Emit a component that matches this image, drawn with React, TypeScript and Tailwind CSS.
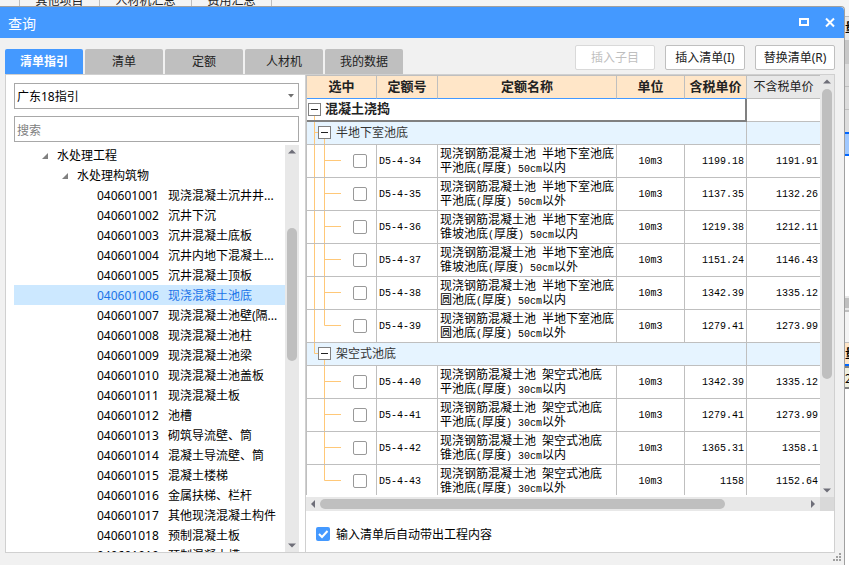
import { Fragment } from 'react'

const tabs = ['清单指引', '清单', '定额', '人材机', '我的数据']

const guideItems = [
  { code: '040601001', name: '现浇混凝土沉井井...' },
  { code: '040601002', name: '沉井下沉' },
  { code: '040601003', name: '沉井混凝土底板' },
  { code: '040601004', name: '沉井内地下混凝土...' },
  { code: '040601005', name: '沉井混凝土顶板' },
  { code: '040601006', name: '现浇混凝土池底' },
  { code: '040601007', name: '现浇混凝土池壁(隔...' },
  { code: '040601008', name: '现浇混凝土池柱' },
  { code: '040601009', name: '现浇混凝土池梁' },
  { code: '040601010', name: '现浇混凝土池盖板' },
  { code: '040601011', name: '现浇混凝土板' },
  { code: '040601012', name: '池槽' },
  { code: '040601013', name: '砌筑导流壁、筒' },
  { code: '040601014', name: '混凝土导流壁、筒' },
  { code: '040601015', name: '混凝土楼梯' },
  { code: '040601016', name: '金属扶梯、栏杆' },
  { code: '040601017', name: '其他现浇混凝土构件' },
  { code: '040601018', name: '预制混凝土板' },
  { code: '040601019', name: '预制混凝土槽' },
]

const selectedCode = '040601006'

const groups = [
  {
    title: '半地下室池底',
    rows: [
      { code: 'D5-4-34', name: ['现浇钢筋混凝土池 半地下室池底', '平池底(厚度) 50cm以内'], taxed: '1199.18', untaxed: '1191.91' },
      { code: 'D5-4-35', name: ['现浇钢筋混凝土池 半地下室池底', '平池底(厚度) 50cm以外'], taxed: '1137.35', untaxed: '1132.26' },
      { code: 'D5-4-36', name: ['现浇钢筋混凝土池 半地下室池底', '锥坡池底(厚度) 50cm以内'], taxed: '1219.38', untaxed: '1212.11' },
      { code: 'D5-4-37', name: ['现浇钢筋混凝土池 半地下室池底', '锥坡池底(厚度) 50cm以外'], taxed: '1151.24', untaxed: '1146.43' },
      { code: 'D5-4-38', name: ['现浇钢筋混凝土池 半地下室池底', '圆池底(厚度) 50cm以内'], taxed: '1342.39', untaxed: '1335.12' },
      { code: 'D5-4-39', name: ['现浇钢筋混凝土池 半地下室池底', '圆池底(厚度) 50cm以外'], taxed: '1279.41', untaxed: '1273.99' },
    ],
  },
  {
    title: '架空式池底',
    rows: [
      { code: 'D5-4-40', name: ['现浇钢筋混凝土池 架空式池底', '平池底(厚度) 30cm以内'], taxed: '1342.39', untaxed: '1335.12' },
      { code: 'D5-4-41', name: ['现浇钢筋混凝土池 架空式池底', '平池底(厚度) 30cm以外'], taxed: '1279.41', untaxed: '1273.99' },
      { code: 'D5-4-42', name: ['现浇钢筋混凝土池 架空式池底', '锥池底(厚度) 30cm以内'], taxed: '1365.31', untaxed: '1358.1' },
      { code: 'D5-4-43', name: ['现浇钢筋混凝土池 架空式池底', '锥池底(厚度) 30cm以外'], taxed: '1158', untaxed: '1152.64' },
    ],
  },
]

const arrowPaths = {
  up: 'M3 8.5 L7 4.5 L11 8.5 Z',
  down: 'M3 5.5 L7 9.5 L11 5.5 Z',
  left: 'M9 3 L5 7 L9 11 Z',
  right: 'M5 3 L9 7 L5 11 Z',
}

function Arrow({ dir }: { dir: keyof typeof arrowPaths }) {
  return (
    <svg className="size-3.5 shrink-0" viewBox="0 0 14 14" fill="#6e6e78">
      <path d={arrowPaths[dir]} />
    </svg>
  )
}

// latin characters are half the width of a chinese one
function HalfWidth({ text }: { text: string }) {
  return (
    <>
      {text.split(/([ -~]+)/).map((part, i) =>
        i % 2 ? <span key={i} className="text-[10px]">{part}</span> : part
      )}
    </>
  )
}

function TreeCaret() {
  return (
    <svg className="size-2" viewBox="0 0 8 8" fill="#808080">
      <path d="M7 1 V7 H1 Z" />
    </svg>
  )
}

function GuideTree() {
  return (
    <div className="mt-[3px] flex min-h-0 flex-1">
      <ul className="min-w-0 flex-1 overflow-hidden whitespace-nowrap text-xs leading-[22px] text-black">
        <li className="flex h-5 items-center gap-2 pt-0.5 pl-[27px]"><TreeCaret />水处理工程</li>
        <li className="flex h-5 items-center gap-2 pt-0.5 pl-[47px]"><TreeCaret />水处理构筑物</li>
        {guideItems.map(item => (
          <li
            key={item.code}
            className={`flex h-5 pl-[83px] ${item.code === selectedCode ? 'bg-[#cce8ff] text-[#1a73e8]' : ''}`}
          >
            <span className="w-[71px] shrink-0">{item.code}</span>
            <span>{item.name}</span>
          </li>
        ))}
      </ul>
      <div className="flex w-3.5 flex-col items-center bg-[#e8e8e8]">
        <Arrow dir="up" />
        <div className="grow-[69]" />
        <div className="w-2.5 grow-[132] rounded-full bg-[#bfbfbf]" />
        <div className="grow-[177]" />
        <Arrow dir="down" />
      </div>
    </div>
  )
}

function ToggleBox({ x }: { x: number }) {
  return (
    <>
      <rect x={x + 0.5} y="4.5" width="12" height="12" fill="#fff" stroke="#808080" />
      <path d={`M${x + 3} 10.5 H${x + 10}`} stroke="#222" />
    </>
  )
}

function QuotaTable() {
  return (
    <table className="w-full table-fixed border-separate border-spacing-0 font-['Liberation_Mono','Noto_Sans_CJK_SC',monospace] text-black">
      <colgroup>
        <col className="w-[70px]" />
        <col className="w-[61px]" />
        <col />
        <col className="w-[68px]" />
        <col className="w-[62px]" />
        <col className="w-[73px]" />
      </colgroup>
      <thead>
        <tr className="h-6 whitespace-nowrap text-[13px] leading-5 text-[#222]">
          {['选中', '定额号', '定额名称', '单位', '含税单价'].map(h => (
            <th key={h} className="border-y border-r border-t-[#bfbfbf] border-r-[#bfbfbf] border-b-[#4499ff] bg-[#ffe6c8] px-0 pt-0.5 pb-0 font-bold">{h}</th>
          ))}
          <th className="border-y border-[#bfbfbf] bg-[#e8e8e8] px-0 pt-0.5 pb-0 text-xs leading-5 font-normal">不含税单价</th>
        </tr>
      </thead>
      <tbody>
        <tr className="h-[23px]">
          <td colSpan={5} className="border-r-2 border-b-2 border-[#808080] p-0">
            <div className="flex h-[21px] items-center text-[13px] leading-5 font-bold text-[#222]">
              <button aria-label="收起">
                <svg className="block h-[21px] w-[18px]" viewBox="0 0 18 21" fill="none">
                  <path d="M7.5 17 V21" stroke="#ffc878" />
                  <ToggleBox x={1} />
                </svg>
              </button>
              混凝土浇捣
            </div>
          </td>
          <td className="border-b border-[#bfbfbf] p-0" />
        </tr>
        {groups.map((group, g) => {
          const lastGroup = g === groups.length - 1
          return (
            <Fragment key={group.title}>
              <tr className="h-[23px] bg-[#e6f4ff]">
                <td colSpan={5} className="border-r border-b border-[#bfbfbf] p-0">
                  <div className="flex h-[22px] items-center text-xs leading-5 text-[#333]">
                    <button aria-label="收起">
                      <svg className="block h-[22px] w-[29px]" viewBox="0 0 29 22" fill="none">
                        <path d={lastGroup ? 'M7.5 0 V10.5 H11 M17.5 17 V22' : 'M7.5 0 V22 M7.5 10.5 H11 M17.5 17 V22'} stroke="#ffc878" />
                        <ToggleBox x={11} />
                      </svg>
                    </button>
                    <span className="pt-0.5">{group.title}</span>
                  </div>
                </td>
                <td className="border-b border-[#bfbfbf] p-0" />
              </tr>
              {group.rows.map((row, r) => (
                <tr key={row.code} className="h-[33px] text-[10px]">
                  <td className="border-r border-b border-[#bfbfbf] p-0">
                    <div className="flex h-8 items-center">
                      <svg className="h-8 w-[46px] shrink-0" viewBox="0 0 46 32" fill="none" stroke="#ffc878">
                        {!lastGroup && <path d="M7.5 0 V32" />}
                        <path d={r === group.rows.length - 1 ? 'M17.5 0 V15.5 H34' : 'M17.5 0 V32 M17.5 15.5 H34'} />
                      </svg>
                      <input type="checkbox" aria-label={row.code} className="size-3.5 appearance-none rounded-xs border border-[#999] bg-white" />
                    </div>
                  </td>
                  <td className="border-r border-b border-[#bfbfbf] pt-0.5 pr-0 pb-0 pl-0.5">{row.code}</td>
                  <td className="border-r border-b border-[#bfbfbf] pt-0.5 pr-0 pb-0 pl-0.5 text-xs leading-[14px] whitespace-nowrap">
                    {row.name.map(line => (
                      <div key={line} className="h-3.5"><HalfWidth text={line} /></div>
                    ))}
                  </td>
                  <td className="border-r border-b border-[#bfbfbf] px-0 pt-0.5 pb-0 text-center">10m3</td>
                  <td className="border-r border-b border-[#bfbfbf] pt-0.5 pr-0.5 pb-0 pl-0 text-right">{row.taxed}</td>
                  <td className="border-b border-[#bfbfbf] pt-0.5 pr-0.5 pb-0 pl-0 text-right">{row.untaxed}</td>
                </tr>
              ))}
            </Fragment>
          )
        })}
      </tbody>
    </table>
  )
}

// edge of the main window that shows to the right of the dialog
function WindowEdge() {
  return (
    <div className="-mt-1.5 flex w-1 flex-col overflow-hidden bg-white font-['Noto_Sans_CJK_SC',sans-serif] text-xs leading-5 text-black">
      <div className="h-4 bg-[#f4f4f4]" />
      <div className="h-6 border-t border-[#bfbfbf] bg-[#e8e8e8] font-bold">量</div>
      <div className="h-6 bg-[#c8c8c8]" />
      <div className="h-[23px] border-b border-[#bfbfbf] bg-[#dcdcdc]" />
      <div className="h-[23px] border-b border-[#bfbfbf] bg-[#dcdcdc]" />
      <div className="h-[22px] bg-[#dcdcdc]" />
      <div className="h-6 border-y-2 border-[#0066ff] bg-[#9fc8ff]" />
      <div className="h-[140px]" />
      <div className="h-3.5 border-y-2 border-[#e8e8e8] bg-[#bfbfbf]" />
      <div className="h-8 border-t-2 border-[#bfbfbf] bg-[#f4f4f4]" />
      <div className="h-6 border-t border-b-2 border-t-[#bfbfbf] border-b-[#0066ff] bg-[#ffe6c8] font-bold">量</div>
      <div className="h-[23px] border-y-2 border-[#808080] bg-[#f0f0e0]">2</div>
    </div>
  )
}

export default function App() {
  return (
    <div className="flex h-screen flex-col overflow-hidden bg-[#f4f4f4] font-['Noto_Sans','Noto_Sans_CJK_SC',sans-serif] text-xs">
      <div className="flex h-1.5 shrink-0 items-end overflow-hidden text-center leading-[10px] whitespace-nowrap text-[#222]">
        <div className="h-2.5 w-5 border-r border-[#bfbfbf]" />
        <div className="w-20 border-r border-[#bfbfbf]">其他项目</div>
        <div className="w-[92px] border-r border-[#bfbfbf]">人材机汇总</div>
        <div className="w-20 border-r border-[#bfbfbf]">费用汇总</div>
      </div>

      <div className="flex min-h-0 flex-1">
        <div className="flex min-w-0 flex-1 flex-col rounded-tr border-t border-r border-[#a0a0a0] bg-[#f1f1f1]">
          <header className="flex h-[31px] shrink-0 items-center rounded-tr bg-[#4499ff] pr-2 pl-2 text-white">
            <h1 className="flex-1 pt-0.5 text-sm leading-5">查询</h1>
            <button aria-label="最大化" className="mr-3.5">
              <svg className="block size-3" viewBox="0 0 12 12" fill="none" stroke="#fff" strokeWidth="2">
                <rect x="2" y="2" width="8" height="6" />
              </svg>
            </button>
            <button aria-label="关闭">
              <svg className="block size-3" viewBox="0 0 12 12" fill="none" stroke="#fff" strokeWidth="2">
                <path d="M2 1.5 L10 9.5 M10 1.5 L2 9.5" />
              </svg>
            </button>
          </header>

          <div className="flex min-h-0 flex-1 flex-col pr-[9px] pl-[5px]">
            <div className="flex h-9 shrink-0 items-end justify-between">
              <div className="flex gap-0.5">
                {tabs.map((tab, i) => (
                  <button
                    key={tab}
                    className={`h-[25px] w-[78px] rounded-t-xs ${i === 0 ? 'bg-[#4499ff] font-bold text-white' : 'bg-[#bfbfbf] text-[#222]'}`}
                  >
                    {tab}
                  </button>
                ))}
              </div>
              <div className="flex gap-2.5 pb-1 whitespace-nowrap">
                <button disabled className="h-[25px] w-20 rounded-xs border border-[#d9d9d9] bg-white text-[#bfbfbf]">插入子目</button>
                <button className="h-[25px] w-20 rounded-xs border border-[#bfbfbf] bg-white text-[#222]">插入清单(I)</button>
                <button className="h-[25px] w-20 rounded-xs border border-[#bfbfbf] bg-white text-[#222]">替换清单(R)</button>
              </div>
            </div>

            <div className="flex min-h-0 flex-1 border border-[#d0d0d0] bg-white">
              <div className="flex w-[300px] shrink-0 flex-col border-r border-[#d0d0d0] pt-2 pr-1.5 pl-2">
                <div className="grid shrink-0 items-center">
                  <select aria-label="指引" className="col-start-1 row-start-1 h-[26px] w-full appearance-none border border-[#a8a8a8] bg-white px-0.5 pt-0.5 text-black">
                    <option>广东18指引</option>
                  </select>
                  <svg className="pointer-events-none col-start-1 row-start-1 mr-[5px] h-1 w-1.5 justify-self-end" viewBox="0 0 6 4" fill="#707070">
                    <path d="M0 0 H6 L3 3.5 Z" />
                  </svg>
                </div>
                <input
                  type="text"
                  aria-label="搜索"
                  placeholder="搜索"
                  className="mt-[7px] h-[26px] w-full shrink-0 border border-[#a8a8a8] bg-white px-0.5 pt-0.5 placeholder:text-[#808080]"
                />
                <GuideTree />
              </div>

              <div className="flex min-w-0 flex-1 flex-col">
                <div className="flex min-h-0 flex-1">
                  <div className="mb-0.5 min-w-0 flex-1 overflow-hidden border-l border-[#bfbfbf]">
                    <QuotaTable />
                  </div>
                  <div className="flex w-3.5 flex-col items-center bg-[#e8e8e8]">
                    <Arrow dir="up" />
                    <div className="w-2.5 grow-[290] rounded-full bg-[#bfbfbf]" />
                    <div className="grow-[104]" />
                    <Arrow dir="down" />
                  </div>
                </div>
                <div className="flex h-3.5 shrink-0 items-center bg-[#e8e8e8]">
                  <Arrow dir="left" />
                  <div className="h-2.5 grow-[405] rounded-full bg-[#bfbfbf]" />
                  <div className="grow-[81]" />
                  <Arrow dir="right" />
                  <div className="size-3.5 bg-[#d9d9d9]" />
                </div>
                <label className="flex h-[41px] shrink-0 items-center gap-1.5 pt-1 pl-2.5 text-black">
                  <span className="grid">
                    <input type="checkbox" defaultChecked className="col-start-1 row-start-1 size-3.5 appearance-none rounded-xs bg-[#4499ff]" />
                    <svg className="pointer-events-none col-start-1 row-start-1 size-3.5" viewBox="0 0 14 14" fill="none" stroke="#fff" strokeWidth="2">
                      <path d="M3 7 L6 10 L11.5 4" />
                    </svg>
                  </span>
                  <span className="pt-0.5">输入清单后自动带出工程内容</span>
                </label>
              </div>
            </div>
          </div>

          <div className="flex h-3 shrink-0 justify-end pr-[3px]">
            <svg className="size-2" viewBox="0 0 8 8" fill="#a0a0a0">
              <path d="M6 0h2v2h-2z M3 3h2v2h-2z M6 3h2v2h-2z M0 6h2v2h-2z M3 6h2v2h-2z M6 6h2v2h-2z" />
            </svg>
          </div>
        </div>
        <WindowEdge />
      </div>
    </div>
  )
}
